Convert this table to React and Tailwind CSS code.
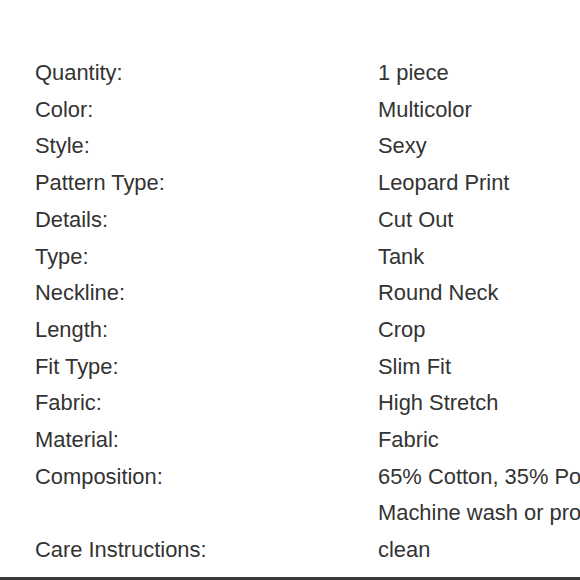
export default function App() {
  const rows = [
    ["Quantity:", "1 piece"],
    ["Color:", "Multicolor"],
    ["Style:", "Sexy"],
    ["Pattern Type:", "Leopard Print"],
    ["Details:", "Cut Out"],
    ["Type:", "Tank"],
    ["Neckline:", "Round Neck"],
    ["Length:", "Crop"],
    ["Fit Type:", "Slim Fit"],
    ["Fabric:", "High Stretch"],
    ["Material:", "Fabric"],
    ["Composition:", "65% Cotton, 35% Polyester"],
  ];
  return (
    <div className="w-[580px] h-[580px] overflow-hidden bg-white relative" style={{ fontFamily: '"Liberation Sans", Arial, sans-serif' }}>
      <div className="h-[577px] pt-[55px] pl-[35px] text-[21.9px] leading-[36.7px] text-[#333333]">
        {rows.map(([k, v]) => (
          <div key={k} className="grid grid-cols-[343px_1fr] whitespace-nowrap">
            <div>{k}</div>
            <div>{v}</div>
          </div>
        ))}
        <div className="grid grid-cols-[343px_1fr] items-end whitespace-nowrap">
          <div>Care Instructions:</div>
          <div>
            <div>Machine wash or professional dry</div>
            <div>clean</div>
          </div>
        </div>
      </div>
      <div className="h-[3px] bg-[#3a3a3a]" />
    </div>
  );
}
